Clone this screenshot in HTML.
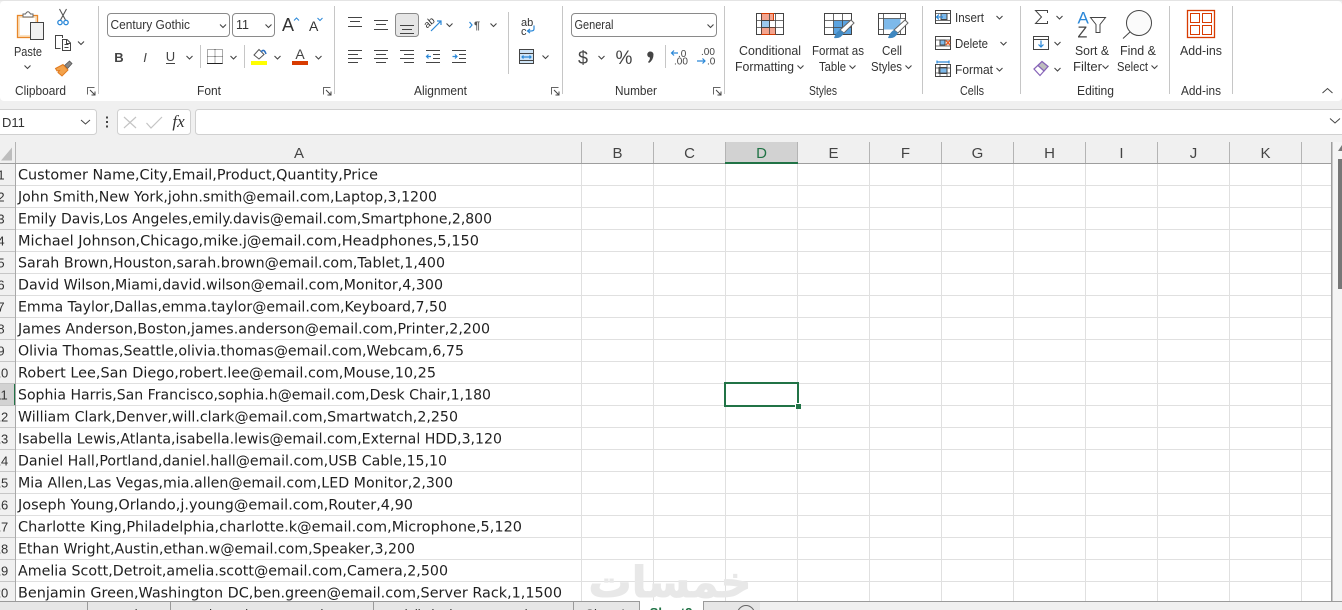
<!DOCTYPE html>
<html><head><meta charset="utf-8"><style>
html,body{margin:0;padding:0;width:1342px;height:610px;overflow:hidden;background:#f0f0f0}
svg{display:block}
text{font-family:"Liberation Sans",sans-serif;font-size:12.500px;fill:#333}
.c{font-family:"DejaVu Sans",sans-serif;font-size:14.300px;fill:#1f1f1f}
.h{font-size:15px;fill:#444;text-anchor:middle}
.r{font-size:13px;fill:#333;text-anchor:middle}
.g{fill:none;stroke:#e0e0e0;stroke-width:1}
.s{fill:none;stroke:#c6c6c6;stroke-width:1}
.i{fill:none;stroke:#444;stroke-width:1}
.b{fill:none;stroke:#2b88d8;stroke-width:1.2}
.m{text-anchor:middle}
</style></head><body>
<svg width="1342" height="610" viewBox="0 0 1342 610" xmlns="http://www.w3.org/2000/svg">
<defs>
<path id="ch" d="M-3 -1.5L0 1.5L3 -1.5" fill="none" stroke="#444" stroke-width="1.1"/>
<g id="launch"><path d="M0.5 7.5V0.5H7.5" fill="none" stroke="#666"/><path d="M3 3L8 8M4.500 8H8V4.500" fill="none" stroke="#444"/></g>
</defs>
<rect width="1342" height="610" fill="#f0f0f0"/>
<!-- ribbon -->
<rect x="0" y="1" width="1342" height="100" rx="4" fill="#fff"/>
<rect x="0" y="0" width="1342" height="1" fill="#e4e4e4"/>
<path class="s" d="M98.500 6V94M334.500 6V94M562.500 6V94M724.500 6V94M922.500 6V94M1020.500 6V94M1169.500 6V94M1232.500 6V94"/>
<!-- clipboard -->
<rect x="17.500" y="15.500" width="20" height="22" fill="#fbe3c4" stroke="#e8872a" stroke-width="1.300"/>
<rect x="20" y="18" width="15" height="17" fill="#fff"/>
<path d="M23 16V14H25.500Q28 9.500 30.500 14H33V17H23Z" fill="#fff" stroke="#666"/>
<rect x="30.500" y="22.500" width="13" height="17" fill="#f2f2f2" stroke="#444"/>
<text x="14" y="56" textLength="28" lengthAdjust="spacingAndGlyphs">Paste</text>
<use href="#ch" x="27.500" y="67"/>
<path d="M59.500 9L65.500 20M66.500 9L60.500 20" fill="none" stroke="#555" stroke-width="1.100"/>
<circle cx="60" cy="22.500" r="2.200" fill="none" stroke="#2b88d8" stroke-width="1.300"/><circle cx="66" cy="22.500" r="2.200" fill="none" stroke="#2b88d8" stroke-width="1.300"/>
<path class="i" d="M60.500 48.500H55.500V35.500H62.500V38M62.500 39.500H67L70.500 43V50.500H62.500ZM64.500 44.500H68.500M64.500 47.500H68.500M66.500 39.500V43.500H70.500"/>
<use href="#ch" x="81" y="43"/>
<path d="M64.500 65.500L69.500 61L72 63.500L67.500 68.500Z" fill="#888" stroke="#555" stroke-width=".8"/>
<path d="M55.500 68.500L63 64.500L68 70L62 76L58 72.500L59.500 70.500L57 71Z" fill="#f3a24b" stroke="#e07a1f"/>
<text x="15" y="95" textLength="51" lengthAdjust="spacingAndGlyphs">Clipboard</text>
<use href="#launch" x="87" y="87"/>
<!-- font -->
<rect x="107.500" y="13.500" width="122" height="23" rx="3.500" fill="#fff" stroke="#8a8a8a"/>
<text x="110.500" y="29" textLength="79.500" lengthAdjust="spacingAndGlyphs">Century Gothic</text>
<use href="#ch" x="223" y="26"/>
<rect x="232.500" y="13.500" width="42" height="23" rx="3.500" fill="#fff" stroke="#8a8a8a"/>
<text x="236" y="29">11</text>
<use href="#ch" x="268.500" y="26"/>
<text x="282" y="31" style="font-size:18px">A</text>
<path d="M294 20.500L296.500 18L299 20.500" fill="none" stroke="#2b88d8"/>
<text x="309" y="31" style="font-size:14px">A</text>
<path d="M317.500 18L320 20.500L322.500 18" fill="none" stroke="#2b88d8"/>
<text x="119" y="62" class="m" style="font-size:13px;font-weight:bold;fill:#444">B</text>
<text x="145" y="62" class="m" style="font-size:13px;font-style:italic;fill:#444">I</text>
<text x="170.500" y="61" class="m" style="font-size:13px;fill:#444">U</text>
<path d="M166 63.500H175" stroke="#444" fill="none"/>
<use href="#ch" x="189.500" y="57.500"/>
<path class="s" d="M200.500 45V68M244.500 45V68"/>
<path d="M207.500 49.500H222.500V63.500H207.500ZM215 49.500V63.500M207.500 56.500H222.500" fill="none" stroke="#555" stroke-dasharray="1 1"/>
<path d="M207 63.500H222.500" stroke="#222" fill="none"/>
<use href="#ch" x="233.500" y="57.500"/>
<path d="M254 55L259 49.500L264 54.500L259 59Z" fill="#fff" stroke="#555"/>
<path d="M261 52Q264 48 266 54" fill="none" stroke="#2b6fc0" stroke-width="1.500"/>
<rect x="251" y="61" width="16" height="4" fill="#ffff00"/>
<use href="#ch" x="277.500" y="57.500"/>
<text x="300" y="59" class="m" style="font-size:14px;fill:#444">A</text>
<rect x="292" y="61" width="16" height="4" fill="#d83b01"/>
<use href="#ch" x="318.500" y="57.500"/>
<text x="197" y="95" textLength="24" lengthAdjust="spacingAndGlyphs">Font</text>
<use href="#launch" x="323" y="87"/>
<!-- alignment -->
<path class="i" d="M348 17.500H362M350 21.500H360M348 26.500H362M374 20.500H388M376 24.500H386M374 29.500H388"/>
<rect x="395.500" y="13.500" width="23" height="23" rx="3" fill="#e6e6e6" stroke="#8a8a8a"/>
<path class="i" d="M400 25.500H414M402 29.500H412M400 33.500H414"/>
<text x="425" y="25" style="font-size:10px" transform="rotate(-40 431 24)">ab</text>
<path d="M431 31L441 21M437 21H441V25" fill="none" stroke="#2b88d8" stroke-width="1.200"/>
<use href="#ch" x="449.500" y="25"/>
<path d="M469.500 22L472 25L469.500 28" class="b"/>
<text x="474" y="29" style="font-size:11px;font-weight:bold;fill:#555">¶</text>
<use href="#ch" x="493.500" y="25"/>
<path class="i" d="M348 50.500H362M348 54.500H358M348 58.500H362M348 62.500H358M374 50.500H388M376 54.500H386M374 58.500H388M376 62.500H386M400 50.500H414M404 54.500H414M400 58.500H414M404 62.500H414"/>
<path class="i" d="M426 50.500H440M433 54.500H440M433 58.500H440M426 62.500H440M452 50.500H466M459 54.500H466M459 58.500H466M452 62.500H466"/>
<path class="b" d="M431 56.500H426.500M428.500 54.500L426.500 56.500L428.500 58.500M452.500 56.500H457M455 54.500L457 56.500L455 58.500"/>
<path class="s" d="M508.500 12V74"/>
<text x="521" y="26" style="font-size:11px">ab</text>
<text x="521" y="35" style="font-size:11px">c</text>
<path class="b" d="M534 25.500V29Q534 31 531 31H528M530 29L527.500 31L530 33"/>
<rect x="519.500" y="49.500" width="14" height="14" fill="#cfe5f7" stroke="#444"/>
<path d="M519.500 53.500H533.500M519.500 60.500H533.500" stroke="#444" fill="none"/>
<path class="b" d="M522 57H531M523.500 55.500L522 57L523.500 58.500M529.500 55.500L531 57L529.500 58.500"/>
<use href="#ch" x="545.500" y="57"/>
<text x="414" y="95" textLength="53" lengthAdjust="spacingAndGlyphs">Alignment</text>
<use href="#launch" x="551" y="87"/>
<!-- number -->
<rect x="571.500" y="13.500" width="145" height="23" rx="3.500" fill="#fff" stroke="#8a8a8a"/>
<text x="574.500" y="29" textLength="39" lengthAdjust="spacingAndGlyphs">General</text>
<use href="#ch" x="710.500" y="26"/>
<text x="583" y="64" class="m" style="font-size:18px;fill:#444">$</text>
<use href="#ch" x="601.500" y="57.500"/>
<text x="624" y="64" class="m" style="font-size:19px;fill:#444">%</text>
<path d="M650.500 51.500a3 3 0 0 1 3 3Q653.500 60 649 63L648 62Q650 60 650 57.500a3 3 0 0 1 .5 -6Z" fill="#444"/>
<path class="s" d="M665.500 45V68"/>
<text x="678" y="57" style="font-size:10px;fill:#444">.0</text>
<text x="674" y="64.500" style="font-size:10px;fill:#444">.00</text>
<path class="b" d="M671.500 53H678M674 50.500L671.500 53L674 55.500"/>
<text x="701" y="55" style="font-size:10px;fill:#444">.00</text>
<text x="707" y="64.500" style="font-size:10px;fill:#444">.0</text>
<path class="b" d="M697 61H705M702.500 58.500L705 61L702.500 63.500"/>
<text x="615" y="95" textLength="42" lengthAdjust="spacingAndGlyphs">Number</text>
<use href="#launch" x="713" y="87"/>
<!-- styles: CF -->
<g transform="translate(756.500 13.500)">
<rect width="27" height="21" fill="#fff" stroke="#444"/>
<rect x="5" y="0" width="12" height="7" fill="#f4a48e" stroke="#d83b01"/>
<rect x="5" y="14" width="14" height="7" fill="#f4a48e" stroke="#d83b01"/>
<rect x="5" y="7" width="8" height="7" fill="#9cc9ee" stroke="#444"/>
<path d="M5 0V21M13 0V21M19 0V21M0 7H27M0 14H27" fill="none" stroke="#444" stroke-width="0.800"/>
</g>
<text x="739" y="55" textLength="62" lengthAdjust="spacingAndGlyphs">Conditional</text>
<text x="735" y="71" textLength="59" lengthAdjust="spacingAndGlyphs">Formatting</text>
<use href="#ch" x="800.500" y="67"/>
<!-- format as table -->
<g transform="translate(824.500 13.500)">
<rect width="27" height="21" fill="#fff" stroke="#444"/>
<rect x="9" y="7" width="18" height="14" fill="#5aa3e0"/>
<path d="M9 0V21M18 0V21M0 7H27M0 14H27" fill="none" stroke="#444" stroke-width="0.800"/>
<rect width="27" height="21" fill="none" stroke="#444"/>
</g>
<path d="M840 30L851 20L854 23L844 33Z" fill="#fff" stroke="#666"/>
<path d="M840 30Q836 32 834 38Q841 39 844 33Z" fill="#3f87c0"/>
<text x="812" y="55" textLength="52" lengthAdjust="spacingAndGlyphs">Format as</text>
<text x="819" y="71" textLength="27" lengthAdjust="spacingAndGlyphs">Table</text>
<use href="#ch" x="852.500" y="67"/>
<!-- cell styles -->
<g transform="translate(878.500 13.500)">
<rect width="27" height="21" fill="#fff" stroke="#444"/>
<rect x="5" y="5" width="17" height="11" fill="#7db9ea"/>
<path d="M5 0V5M22 0V5M0 5H27M0 16H5M5 5V21M22 16V21" fill="none" stroke="#444" stroke-width="0.800"/>
</g>
<path d="M894 30L905 20L908 23L898 33Z" fill="#fff" stroke="#666"/>
<path d="M894 30Q890 32 888 38Q895 39 898 33Z" fill="#3f87c0"/>
<text x="882" y="55" textLength="20" lengthAdjust="spacingAndGlyphs">Cell</text>
<text x="871" y="71" textLength="31" lengthAdjust="spacingAndGlyphs">Styles</text>
<use href="#ch" x="908.500" y="67"/>
<text x="809" y="95" textLength="28" lengthAdjust="spacingAndGlyphs">Styles</text>
<!-- cells -->
<g fill="none" stroke="#444">
<rect x="935.500" y="10.500" width="15" height="13" fill="#fff"/>
<rect x="941" y="13.500" width="6" height="6" fill="#7db9ea" stroke="#444"/>
<rect x="935.500" y="36.500" width="15" height="13" fill="#fff"/>
<rect x="940" y="40" width="5" height="5" fill="#7db9ea"/>
<rect x="935.500" y="64.500" width="15" height="12" fill="#fff"/>
<rect x="939" y="67.500" width="8" height="6" fill="#7db9ea"/>
<path d="M935.500 13.500H950.500M935.500 20.500H950.500M935.500 40H950.500M935.500 46H950.500M940 64.500V76.500M947 64.500V76.500M935.500 68H950.500M935.500 73H950.500" stroke-width=".8"/>
</g>
<path class="b" d="M943 17H936.500M939 14.500L936.500 17L939 19.500M937 62H949M937 60.500V63.500M949 60.500V63.500"/>
<path d="M946 40.500L950 45M950 40.500L946 45" stroke="#e8622a" stroke-width="1.500" fill="none"/>
<text x="955" y="22" textLength="29" lengthAdjust="spacingAndGlyphs">Insert</text>
<text x="955" y="48" textLength="33" lengthAdjust="spacingAndGlyphs">Delete</text>
<text x="955" y="74" textLength="38" lengthAdjust="spacingAndGlyphs">Format</text>
<use href="#ch" x="999.500" y="17.500"/><use href="#ch" x="1003.500" y="43.500"/><use href="#ch" x="999.500" y="69.500"/>
<text x="960" y="95" textLength="24" lengthAdjust="spacingAndGlyphs">Cells</text>
<!-- editing -->
<path class="i" d="M1047.500 13V10.500H1035.500L1041.500 17L1035.500 23.500H1047.500V21"/>
<use href="#ch" x="1059.500" y="17.500"/>
<rect x="1033.500" y="36.500" width="15" height="13" fill="#fff" stroke="#444"/>
<path d="M1033.500 39.500H1048.500" stroke="#444"/>
<path class="b" d="M1041 40.500V47M1038.500 44.500L1041 47L1043.500 44.500"/>
<use href="#ch" x="1057.500" y="43.500"/>
<path d="M1034 69L1042 61.500L1048 66.500L1040 75.500Z" fill="#fff" stroke="#8764b8" stroke-width="1.200"/>
<path d="M1038 65.500L1044 71L1048 66.500L1042 61.500Z" fill="#bdbdbd" stroke="#8764b8" stroke-width="1.200"/>
<use href="#ch" x="1057.500" y="69.500"/>
<text x="1077.500" y="23.500" style="font-size:17px;fill:#2b88d8">A</text>
<text x="1077.500" y="37.500" style="font-size:16px;fill:#444">Z</text>
<path class="i" d="M1090.500 17.500H1105.500L1100 24.500V32.500H1096V24.500Z"/>
<text x="1075" y="55" textLength="34" lengthAdjust="spacingAndGlyphs">Sort &amp;</text>
<text x="1073" y="71" textLength="29" lengthAdjust="spacingAndGlyphs">Filter</text>
<use href="#ch" x="1105.500" y="67"/>
<circle cx="1139" cy="23" r="12.500" fill="#fbfbfb" stroke="#444"/>
<path d="M1130 32L1123 38.500" stroke="#444" fill="none"/>
<text x="1120" y="55" textLength="36" lengthAdjust="spacingAndGlyphs">Find &amp;</text>
<text x="1117" y="71" textLength="31" lengthAdjust="spacingAndGlyphs">Select</text>
<use href="#ch" x="1154.500" y="67"/>
<text x="1077" y="95" textLength="37" lengthAdjust="spacingAndGlyphs">Editing</text>
<!-- add-ins -->
<rect x="1187.500" y="10.500" width="27" height="27" fill="none" stroke="#d83b01" stroke-width="1.300"/>
<rect x="1190.500" y="13.500" width="9" height="9" fill="none" stroke="#d83b01"/><rect x="1202.500" y="13.500" width="9" height="9" fill="none" stroke="#d83b01"/>
<rect x="1190.500" y="25.500" width="9" height="9" fill="none" stroke="#d83b01"/><rect x="1202.500" y="25.500" width="9" height="9" fill="none" stroke="#d83b01"/>
<text x="1180" y="55" textLength="42" lengthAdjust="spacingAndGlyphs">Add-ins</text>
<text x="1181" y="95" textLength="40" lengthAdjust="spacingAndGlyphs">Add-ins</text>
<path d="M1322.500 93L1327.500 88.500L1332.500 93" fill="none" stroke="#444"/>
<!-- formula bar -->
<rect x="-4" y="109.500" width="100.500" height="25" rx="3" fill="#fff" stroke="#d0d0d0"/>
<text x="2" y="127" style="font-size:13px">D11</text>
<path d="M81 120L85.500 124L90 120" fill="none" stroke="#444"/>
<g fill="#444"><rect x="106" y="116.500" width="2" height="2"/><rect x="106" y="121" width="2" height="2"/><rect x="106" y="125.500" width="2" height="2"/></g>
<rect x="117.500" y="109.500" width="73" height="25" rx="3" fill="#fff" stroke="#d0d0d0"/>
<path d="M124 117L136 128M136 117L124 128M146.500 123L151 128L162 117" fill="none" stroke="#c4c4c4" stroke-width="1.200"/>
<text x="178.500" y="127" class="m" style="font-family:'Liberation Serif',serif;font-style:italic;font-size:17px;fill:#333">fx</text>
<rect x="195.500" y="109.500" width="1150" height="25" rx="3" fill="#fff" stroke="#d0d0d0"/>
<path d="M1330 118.500L1335 123L1340 118.500" fill="none" stroke="#444"/>
<!-- grid background -->
<rect x="16" y="164" width="1316" height="437" fill="#fff"/>
<path class="g" d="M16 185.500H1331M16 207.500H1331M16 229.500H1331M16 251.500H1331M16 273.500H1331M16 295.500H1331M16 317.500H1331M16 339.500H1331M16 361.500H1331M16 383.500H1331M16 405.500H1331M16 427.500H1331M16 449.500H1331M16 471.500H1331M16 493.500H1331M16 515.500H1331M16 537.500H1331M16 559.500H1331M16 581.500H1331"/>
<path class="g" d="M581.500 164V601M653.500 164V601M725.500 164V601M797.500 164V601M869.500 164V601M941.500 164V601M1013.500 164V601M1085.500 164V601M1157.500 164V601M1229.500 164V601M1301.500 164V601"/>
<!-- watermark -->
<text x="670" y="597" style="font-family:'DejaVu Sans',sans-serif;font-weight:bold;font-size:43px;fill:#e8e8e8;stroke:#e8e8e8;stroke-width:1;text-anchor:middle" direction="rtl">خمسات</text>
<!-- headers -->
<rect x="725.500" y="142" width="72" height="20.500" fill="#d2d2d2"/>
<path d="M15.500 142V163M581.500 142V163M653.500 142V163M725.500 142V163M797.500 142V163M869.500 142V163M941.500 142V163M1013.500 142V163M1085.500 142V163M1157.500 142V163M1229.500 142V163M1301.500 142V163" stroke="#b4b4b4" fill="none"/>
<path d="M0 163.500H1332" stroke="#9e9e9e" fill="none"/>
<rect x="725" y="162" width="73" height="2" fill="#217346"/>
<path d="M1 160.500H12V147.500Z" fill="#bdbdbd"/>
<text x="299" y="158" class="h">A</text><text x="617.500" y="158" class="h">B</text><text x="689.500" y="158" class="h">C</text>
<text x="761.500" y="158" class="h" style="fill:#217346">D</text><text x="833.500" y="158" class="h">E</text><text x="905.500" y="158" class="h">F</text>
<text x="977.500" y="158" class="h">G</text><text x="1049.500" y="158" class="h">H</text><text x="1121.500" y="158" class="h">I</text>
<text x="1193.500" y="158" class="h">J</text><text x="1265.500" y="158" class="h">K</text>
<!-- row header -->
<rect x="0" y="384" width="15" height="22" fill="#d2d2d2"/>
<rect x="14" y="384" width="2" height="22" fill="#217346"/>
<path d="M15.500 164V601" stroke="#a8a8a8" fill="none"/>
<path d="M0 185.500H15M0 207.500H15M0 229.500H15M0 251.500H15M0 273.500H15M0 295.500H15M0 317.500H15M0 339.500H15M0 361.500H15M0 383.500H15M0 405.500H15M0 427.500H15M0 449.500H15M0 471.500H15M0 493.500H15M0 515.500H15M0 537.500H15M0 559.500H15M0 581.500H15" stroke="#c6c6c6" fill="none"/>
<g>
<text class="r" x="1" y="179.500">1</text><text class="r" x="1" y="201.500">2</text><text class="r" x="1" y="223.500">3</text><text class="r" x="1" y="245.500">4</text><text class="r" x="1" y="267.500">5</text><text class="r" x="1" y="289.500">6</text><text class="r" x="1" y="311.500">7</text><text class="r" x="1" y="333.500">8</text><text class="r" x="1" y="355.500">9</text><text class="r" x="1" y="377.500">10</text>
<text class="r" x="1" y="399.500">11</text><text class="r" x="1" y="421.500">12</text><text class="r" x="1" y="443.500">13</text><text class="r" x="1" y="465.500">14</text><text class="r" x="1" y="487.500">15</text><text class="r" x="1" y="509.500">16</text><text class="r" x="1" y="531.500">17</text><text class="r" x="1" y="553.500">18</text><text class="r" x="1" y="575.500">19</text><text class="r" x="1" y="597.500">20</text>
</g>
<!-- cells text -->
<text class="c" x="18" y="179.500" textLength="360" lengthAdjust="spacingAndGlyphs">Customer Name,City,Email,Product,Quantity,Price</text>
<text class="c" x="18" y="201.500" textLength="419" lengthAdjust="spacingAndGlyphs">John Smith,New York,john.smith@email.com,Laptop,3,1200</text>
<text class="c" x="18" y="223.500" textLength="474" lengthAdjust="spacingAndGlyphs">Emily Davis,Los Angeles,emily.davis@email.com,Smartphone,2,800</text>
<text class="c" x="18" y="245.500" textLength="461" lengthAdjust="spacingAndGlyphs">Michael Johnson,Chicago,mike.j@email.com,Headphones,5,150</text>
<text class="c" x="18" y="267.500" textLength="427" lengthAdjust="spacingAndGlyphs">Sarah Brown,Houston,sarah.brown@email.com,Tablet,1,400</text>
<text class="c" x="18" y="289.500" textLength="425" lengthAdjust="spacingAndGlyphs">David Wilson,Miami,david.wilson@email.com,Monitor,4,300</text>
<text class="c" x="18" y="311.500" textLength="429" lengthAdjust="spacingAndGlyphs">Emma Taylor,Dallas,emma.taylor@email.com,Keyboard,7,50</text>
<text class="c" x="18" y="333.500" textLength="472" lengthAdjust="spacingAndGlyphs">James Anderson,Boston,james.anderson@email.com,Printer,2,200</text>
<text class="c" x="18" y="355.500" textLength="446" lengthAdjust="spacingAndGlyphs">Olivia Thomas,Seattle,olivia.thomas@email.com,Webcam,6,75</text>
<text class="c" x="18" y="377.500" textLength="418" lengthAdjust="spacingAndGlyphs">Robert Lee,San Diego,robert.lee@email.com,Mouse,10,25</text>
<text class="c" x="18" y="399.500" textLength="473" lengthAdjust="spacingAndGlyphs">Sophia Harris,San Francisco,sophia.h@email.com,Desk Chair,1,180</text>
<text class="c" x="18" y="421.500" textLength="440" lengthAdjust="spacingAndGlyphs">William Clark,Denver,will.clark@email.com,Smartwatch,2,250</text>
<text class="c" x="18" y="443.500" textLength="484" lengthAdjust="spacingAndGlyphs">Isabella Lewis,Atlanta,isabella.lewis@email.com,External HDD,3,120</text>
<text class="c" x="18" y="465.500" textLength="429" lengthAdjust="spacingAndGlyphs">Daniel Hall,Portland,daniel.hall@email.com,USB Cable,15,10</text>
<text class="c" x="18" y="487.500" textLength="435" lengthAdjust="spacingAndGlyphs">Mia Allen,Las Vegas,mia.allen@email.com,LED Monitor,2,300</text>
<text class="c" x="18" y="509.500" textLength="395" lengthAdjust="spacingAndGlyphs">Joseph Young,Orlando,j.young@email.com,Router,4,90</text>
<text class="c" x="18" y="531.500" textLength="504" lengthAdjust="spacingAndGlyphs">Charlotte King,Philadelphia,charlotte.k@email.com,Microphone,5,120</text>
<text class="c" x="18" y="553.500" textLength="397" lengthAdjust="spacingAndGlyphs">Ethan Wright,Austin,ethan.w@email.com,Speaker,3,200</text>
<text class="c" x="18" y="575.500" textLength="430" lengthAdjust="spacingAndGlyphs">Amelia Scott,Detroit,amelia.scott@email.com,Camera,2,500</text>
<text class="c" x="18" y="597.500" textLength="544" lengthAdjust="spacingAndGlyphs">Benjamin Green,Washington DC,ben.green@email.com,Server Rack,1,1500</text>
<!-- selection -->
<rect x="725" y="383" width="73" height="23" fill="none" stroke="#217346" stroke-width="2"/>
<rect x="795" y="403" width="6" height="6" fill="#fff"/>
<rect x="796" y="404" width="5" height="5" fill="#217346"/>
<!-- scroll -->
<rect x="1331" y="142" width="1.500" height="460" fill="#9e9e9e"/>
<rect x="1333" y="142" width="9" height="460" fill="#f4f4f4"/>
<path d="M1338 151L1342 145V151Z" fill="#777"/>
<rect x="1338" y="159" width="4" height="130" fill="#777"/>
<!-- tabs -->
<rect x="0" y="601" width="1342" height="9" fill="#f0f0f0"/>
<rect x="0" y="602" width="760" height="8" fill="#e6e6e6"/>
<path d="M0 601.500H640M703 601.500H1342" stroke="#9a9a9a" fill="none"/>
<path d="M87.500 602V610M170.500 602V610M373.500 602V610M573.500 602V610M639.500 602V610M703.500 602V610" stroke="#9a9a9a" fill="none"/>
<rect x="640" y="601" width="63" height="9" fill="#fff"/>
<text x="129" y="618.500" class="m" style="font-size:13px">raw_data</text>
<text x="272" y="618.500" class="m" style="font-size:13px">cleaned_customer_data</text>
<text x="473" y="618.500" class="m" style="font-size:13px">delimited_customer_data</text>
<text x="606" y="618.500" class="m" style="font-size:13px">Sheet1</text>
<text x="671" y="617" class="m" style="font-size:13px;font-weight:bold;fill:#217346">Sheet2</text>
<circle cx="746" cy="614" r="8.500" fill="none" stroke="#666"/>
</svg>
</body></html>
